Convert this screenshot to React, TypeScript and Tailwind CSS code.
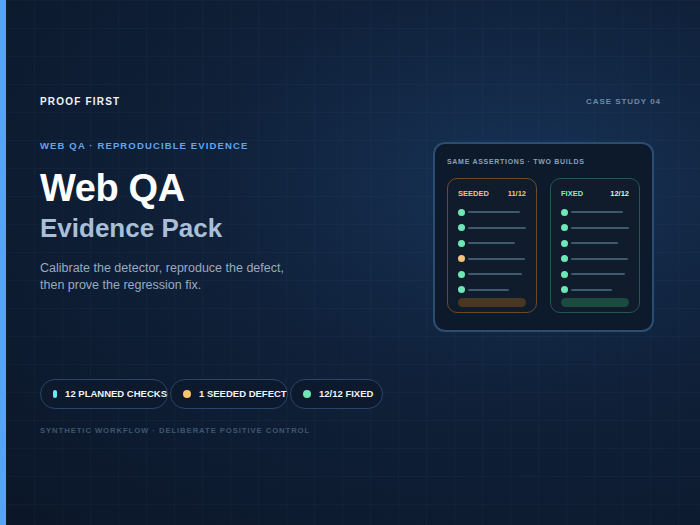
import React from "react";

function Build({ title, score, tone, widths, dots }: { title: string; score: string; tone: "amber" | "green"; widths: number[]; dots: string[] }) {
  const amber = tone === "amber";
  return (
    <div className={`w-[90px] h-[135px] rounded-[10px] border px-[10px] pt-[10px] pb-[5px] flex flex-col ${amber ? "border-[#6b4a2a] bg-[#101c2c]" : "border-[#23584f] bg-[#101c2c]"}`}>
      <div className="flex justify-between items-center text-[7.5px] font-bold leading-[9px]">
        <span className={amber ? "text-[#f6c27a]" : "text-[#7ef0c4]"}>{title}</span>
        <span className={amber ? "text-[#f6c27a]" : "text-[#d9f5ee]"}>{score}</span>
      </div>
      <div className="flex flex-col gap-[8.5px] mt-[11px]">
        {widths.map((w, i) => (
          <div key={i} className="flex items-center gap-[3px]">
            <div className={`w-[7px] h-[7px] rounded-full ${dots[i]}`} />
            <div className="h-[2px] rounded bg-[#3d5a70]" style={{ width: w }} />
          </div>
        ))}
      </div>
      <div className={`mt-auto h-[9px] rounded-full ${amber ? "bg-[#4a3722]" : "bg-[#1b4a40]"}`} />
    </div>
  );
}

export default function App() {
  const g = "bg-[#6ee7b7]";
  return (
    <div className="w-[700px] h-[525px] flex overflow-hidden bg-[radial-gradient(ellipse_at_75%_35%,#173256_0%,#0f2038_45%,#0b1628_100%)]" style={{ fontFamily: "Liberation Sans, Arial, sans-serif" }}>
      <div className="w-[6px] h-full bg-[#5aa2f2]" />
      <div className="flex-1 relative bg-[linear-gradient(rgba(120,160,210,0.04)_1px,transparent_1px),linear-gradient(90deg,rgba(120,160,210,0.04)_1px,transparent_1px)] bg-[size:28px_28px] pl-[34px] pr-[39px] pt-[94px]">
        <div className="flex justify-between items-center">
          <span className="text-[10px] font-bold tracking-[0.12em] text-[#eef3f8]">PROOF FIRST</span>
          <span className="text-[8px] font-bold tracking-[0.12em] text-[#6c8aa8]">CASE STUDY 04</span>
        </div>
        <div className="flex justify-between mt-[30px]">
          <div className="flex flex-col">
            <span className="text-[9.5px] font-bold tracking-[0.12em] text-[#5ea6ee]">WEB QA · REPRODUCIBLE EVIDENCE</span>
            <h1 className="text-[38px] font-bold text-white leading-none mt-[16px] tracking-[-0.01em]">Web QA</h1>
            <h2 className="text-[26px] font-bold text-[#a9bfd6] leading-none mt-[8px]">Evidence Pack</h2>
            <p className="text-[12.5px] text-[#98abc0] leading-[17px] mt-[19px]">Calibrate the detector, reproduce the defect,<br />then prove the regression fix.</p>
          </div>
          <div className="w-[221px] h-[190px] mt-[3px] mr-[7px] rounded-[12px] border-2 border-[#2b4d72] bg-[#0d1a2b] px-[12px] pt-[13px] flex flex-col">
            <span className="text-[7px] font-bold tracking-[0.1em] text-[#8aa0b8]">SAME ASSERTIONS · TWO BUILDS</span>
            <div className="flex justify-between mt-[10px]">
              <Build title="SEEDED" score="11/12" tone="amber" widths={[52, 59, 47, 57, 54, 41]} dots={[g, g, g, "bg-[#f6c27a]", g, g]} />
              <Build title="FIXED" score="12/12" tone="green" widths={[52, 59, 47, 57, 54, 41]} dots={[g, g, g, g, g, g]} />
            </div>
          </div>
        </div>
        <div className="flex mt-[47px] gap-[2px]">
          {[
            ["12 PLANNED CHECKS", "bg-[#67e8f9]", "w-[128px]"],
            ["1 SEEDED DEFECT", "bg-[#fbc46a]", "w-[118px]"],
            ["12/12 FIXED", "bg-[#6ee7b7]", "w-[93px]"],
          ].map(([t, c, w]) => (
            <div key={t} className={`${w} h-[30px] rounded-full border border-[#27466a] bg-[#0d1a2d] flex items-center pl-[12px] gap-[8px] whitespace-nowrap`}>
              <div className={`w-[8px] h-[8px] rounded-full ${c}`} />
              <span className="text-[9.5px] font-bold text-[#eef3f8]">{t}</span>
            </div>
          ))}
        </div>
        <div className="mt-[16px] text-[7.7px] font-bold tracking-[0.12em] text-[#3e5670]">SYNTHETIC WORKFLOW · DELIBERATE POSITIVE CONTROL</div>
      </div>
    </div>
  );
}
